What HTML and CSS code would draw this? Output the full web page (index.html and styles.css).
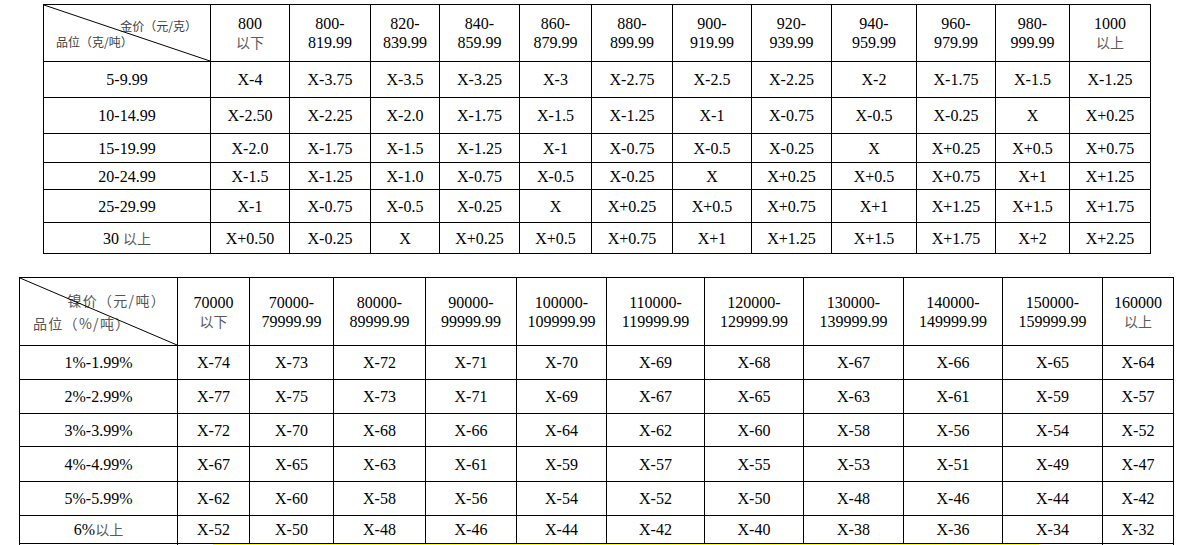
FILE: index.html
```html
<!DOCTYPE html>
<html>
<head>
<meta charset="utf-8">
<title>价格表</title>
<link rel="stylesheet" href="styles.css">
</head>
<body>
<div class="page">
  <table class="grid gold">
    <colgroup>
      <col class="w167"><col class="w79"><col class="w81"><col class="w69"><col class="w80"><col class="w72"><col class="w81"><col class="w79"><col class="w80"><col class="w85"><col class="w79"><col class="w74"><col class="w81">
    </colgroup>
    <tr class="head">
      <td class="diag"><div class="diag-box"><svg class="diag-line" viewBox="0 0 100 100" preserveAspectRatio="none"><line x1="0" y1="0" x2="100" y2="100" vector-effect="non-scaling-stroke"/></svg><div class="d-top">金价（元/克）</div><div class="d-bot">品位（克/吨）</div></div></td>
      <td>800<br><span class="cj">以下</span></td>
      <td>800-<br>819.99</td>
      <td>820-<br>839.99</td>
      <td>840-<br>859.99</td>
      <td>860-<br>879.99</td>
      <td>880-<br>899.99</td>
      <td>900-<br>919.99</td>
      <td>920-<br>939.99</td>
      <td>940-<br>959.99</td>
      <td>960-<br>979.99</td>
      <td>980-<br>999.99</td>
      <td>1000<br><span class="cj">以上</span></td>
    </tr>
    <tr class="r36"><td>5-9.99</td><td>X-4</td><td>X-3.75</td><td>X-3.5</td><td>X-3.25</td><td>X-3</td><td>X-2.75</td><td>X-2.5</td><td>X-2.25</td><td>X-2</td><td>X-1.75</td><td>X-1.5</td><td>X-1.25</td></tr>
    <tr class="r36"><td>10-14.99</td><td>X-2.50</td><td>X-2.25</td><td>X-2.0</td><td>X-1.75</td><td>X-1.5</td><td>X-1.25</td><td>X-1</td><td>X-0.75</td><td>X-0.5</td><td>X-0.25</td><td>X</td><td>X+0.25</td></tr>
    <tr class="r29"><td>15-19.99</td><td>X-2.0</td><td>X-1.75</td><td>X-1.5</td><td>X-1.25</td><td>X-1</td><td>X-0.75</td><td>X-0.5</td><td>X-0.25</td><td>X</td><td>X+0.25</td><td>X+0.5</td><td>X+0.75</td></tr>
    <tr class="r27"><td>20-24.99</td><td>X-1.5</td><td>X-1.25</td><td>X-1.0</td><td>X-0.75</td><td>X-0.5</td><td>X-0.25</td><td>X</td><td>X+0.25</td><td>X+0.5</td><td>X+0.75</td><td>X+1</td><td>X+1.25</td></tr>
    <tr class="r33"><td>25-29.99</td><td>X-1</td><td>X-0.75</td><td>X-0.5</td><td>X-0.25</td><td>X</td><td>X+0.25</td><td>X+0.5</td><td>X+0.75</td><td>X+1</td><td>X+1.25</td><td>X+1.5</td><td>X+1.75</td></tr>
    <tr class="r31"><td>30 <span class="cj">以上</span></td><td>X+0.50</td><td>X-0.25</td><td>X</td><td>X+0.25</td><td>X+0.5</td><td>X+0.75</td><td>X+1</td><td>X+1.25</td><td>X+1.5</td><td>X+1.75</td><td>X+2</td><td>X+2.25</td></tr>
  </table>

  <table class="grid nickel">
    <colgroup>
      <col class="w158"><col class="w72"><col class="w84"><col class="w92"><col class="w91"><col class="w90"><col class="w98"><col class="w99"><col class="w100"><col class="w99"><col class="w100"><col class="w71">
    </colgroup>
    <tr class="head2">
      <td class="diag diag2"><div class="diag-box"><svg class="diag-line" viewBox="0 0 100 100" preserveAspectRatio="none"><line x1="0" y1="0" x2="100" y2="100" vector-effect="non-scaling-stroke"/></svg><div class="d-top">镍价（元/吨）</div><div class="d-bot">品位（%/吨）</div></div></td>
      <td>70000<br><span class="cj">以下</span></td>
      <td>70000-<br>79999.99</td>
      <td>80000-<br>89999.99</td>
      <td>90000-<br>99999.99</td>
      <td>100000-<br>109999.99</td>
      <td>110000-<br>119999.99</td>
      <td>120000-<br>129999.99</td>
      <td>130000-<br>139999.99</td>
      <td>140000-<br>149999.99</td>
      <td>150000-<br>159999.99</td>
      <td>160000<br><span class="cj">以上</span></td>
    </tr>
    <tr class="r34"><td>1%-1.99%</td><td>X-74</td><td>X-73</td><td>X-72</td><td>X-71</td><td>X-70</td><td>X-69</td><td>X-68</td><td>X-67</td><td>X-66</td><td>X-65</td><td>X-64</td></tr>
    <tr class="r34"><td>2%-2.99%</td><td>X-77</td><td>X-75</td><td>X-73</td><td>X-71</td><td>X-69</td><td>X-67</td><td>X-65</td><td>X-63</td><td>X-61</td><td>X-59</td><td>X-57</td></tr>
    <tr class="r33"><td>3%-3.99%</td><td>X-72</td><td>X-70</td><td>X-68</td><td>X-66</td><td>X-64</td><td>X-62</td><td>X-60</td><td>X-58</td><td>X-56</td><td>X-54</td><td>X-52</td></tr>
    <tr class="r35"><td>4%-4.99%</td><td>X-67</td><td>X-65</td><td>X-63</td><td>X-61</td><td>X-59</td><td>X-57</td><td>X-55</td><td>X-53</td><td>X-51</td><td>X-49</td><td>X-47</td></tr>
    <tr class="r34"><td>5%-5.99%</td><td>X-62</td><td>X-60</td><td>X-58</td><td>X-56</td><td>X-54</td><td>X-52</td><td>X-50</td><td>X-48</td><td>X-46</td><td>X-44</td><td>X-42</td></tr>
    <tr class="r28"><td>6%<span class="cj">以上</span></td><td>X-52</td><td>X-50</td><td>X-48</td><td>X-46</td><td>X-44</td><td>X-42</td><td>X-40</td><td>X-38</td><td>X-36</td><td>X-34</td><td>X-32</td></tr>
    <tr class="r30"><td></td><td class="hl-cell"><div class="hl"></div></td><td></td><td></td><td></td><td></td><td></td><td></td><td></td><td></td><td></td><td></td></tr>
  </table>
</div>
</body>
</html>
```

FILE: styles.css
```css
html, body {
  margin: 0;
  padding: 0;
  background: #fff;
}
body {
  font-family: "Liberation Serif", "Noto Sans CJK SC", serif;
  font-size: 16px;
  color: #000;
  overflow: hidden;
}
.page {
  padding-top: 4px;
}
.grid {
  border-collapse: collapse;
  table-layout: fixed;
}
.grid td {
  border: 1px solid #000;
  padding: 0;
  text-align: center;
  vertical-align: middle;
  line-height: 19px;
  white-space: nowrap;
  overflow: hidden;
}
.gold {
  width: 1107px;
  margin-left: 43px;
}
.nickel {
  width: 1154px;
  margin-left: 19px;
  margin-top: 23px;
}
.cj {
  font-family: "Noto Sans CJK SC", sans-serif;
  font-size: 14px;
  line-height: 16px;
  color: #5a5a5a;
}

/* diagonal header cells */
.grid td.diag {
  padding: 0;
  vertical-align: top;
  text-align: left;
}
.diag-box {
  position: relative;
  height: 56px;
  box-sizing: border-box;
  padding: 13px 13px 0 12px;
  font-family: "Noto Sans CJK SC", sans-serif;
  font-size: 12px;
  line-height: 16px;
  color: #3d3d3d;
}
.diag2 .diag-box {
  height: 67px;
  padding: 11px 11px 0 13px;
  font-size: 14px;
  line-height: 23px;
  letter-spacing: 1.3px;
  color: #555;
}
.d-top {
  text-align: right;
}
.d-bot {
  text-align: left;
}
.diag-line {
  position: absolute;
  left: 0;
  top: 0;
  width: 100%;
  height: 100%;
  overflow: visible;
}
.diag-line line {
  stroke: #000;
  stroke-width: 1;
}

/* row heights */
.head td { height: 56px; }
.head2 td { height: 67px; }
.r36 td { height: 35px; }
.r35 td { height: 34px; }
.r34 td { height: 33px; }
.r33 td { height: 32px; }
.r31 td { height: 30px; }
.r30 td { height: 29px; }
.r29 td { height: 28px; }
.r28 td { height: 27px; }
.r27 td { height: 26px; }

/* yellow highlight peeking in below the nickel table */
.grid td.hl-cell {
  position: relative;
  overflow: visible;
  vertical-align: top;
}
.hl {
  position: absolute;
  left: 35px;
  top: 0;
  width: 826px;
  height: 18px;
  background: #ffff00;
}

col.w167 { width: 167px; }
col.w158 { width: 158px; }
col.w100 { width: 100px; }
col.w99 { width: 99px; }
col.w98 { width: 98px; }
col.w92 { width: 92px; }
col.w91 { width: 91px; }
col.w90 { width: 90px; }
col.w85 { width: 85px; }
col.w84 { width: 84px; }
col.w81 { width: 81px; }
col.w80 { width: 80px; }
col.w79 { width: 79px; }
col.w74 { width: 74px; }
col.w72 { width: 72px; }
col.w71 { width: 71px; }
col.w69 { width: 69px; }
```
